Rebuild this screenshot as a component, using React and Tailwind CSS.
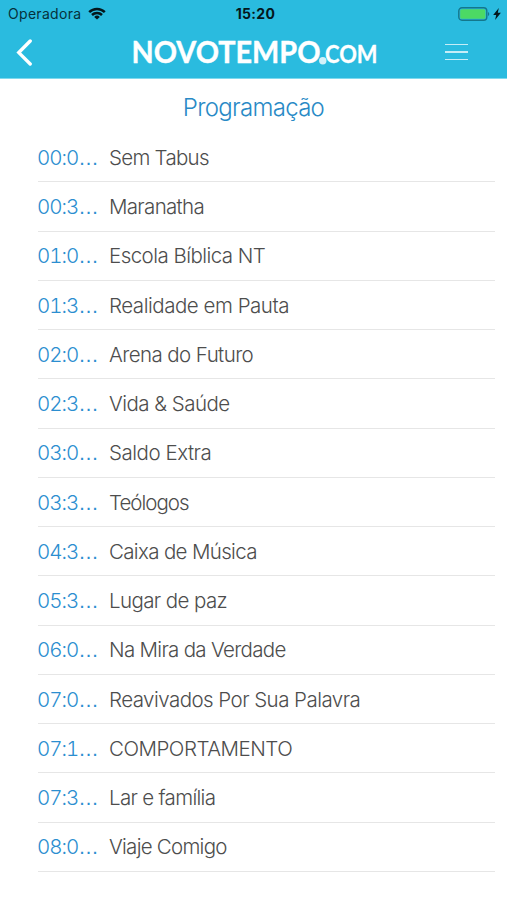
import React from 'react';

const programs = [
    { time: '00:00', name: 'Sem Tabus', tracking: 'tracking-[-0.72px]' },
    { time: '00:30', name: 'Maranatha', tracking: 'tracking-[-0.68px]' },
    { time: '01:00', name: 'Escola Bíblica NT', tracking: 'tracking-[-0.54px]' },
    { time: '01:30', name: 'Realidade em Pauta', tracking: 'tracking-[-0.47px]' },
    { time: '02:00', name: 'Arena do Futuro', tracking: 'tracking-[-0.58px]' },
    { time: '02:30', name: 'Vida & Saúde', tracking: 'tracking-[-0.53px]' },
    { time: '03:00', name: 'Saldo Extra', tracking: 'tracking-[-0.47px]' },
    { time: '03:30', name: 'Teólogos', tracking: 'tracking-[-0.98px]' },
    { time: '04:30', name: 'Caixa de Música', tracking: 'tracking-[-0.66px]' },
    { time: '05:30', name: 'Lugar de paz', tracking: 'tracking-[-0.6px]' },
    { time: '06:00', name: 'Na Mira da Verdade', tracking: 'tracking-[-0.69px]' },
    { time: '07:00', name: 'Reavivados Por Sua Palavra', tracking: 'tracking-[-0.54px]' },
    { time: '07:15', name: 'COMPORTAMENTO', tracking: 'tracking-[-0.49px]' },
    { time: '07:30', name: 'Lar e família', tracking: 'tracking-[-0.68px]' },
    { time: '08:00', name: 'Viaje Comigo', tracking: 'tracking-[-0.74px]' },
];

const StatusBar = () => (
    <div className="grid h-[27px] grid-cols-3 items-center pl-[8px] pr-[6px] leading-none text-[#06313b]">
        <div className="flex items-center gap-[7px]">
            <span className="pt-[1px] text-[14px] tracking-[0.3px]">Operadora</span>
            <svg className="h-[13px] w-[18px]" viewBox="0 0 18 13" fill="none" stroke="#04171c" strokeWidth="2.5">
                <path d="M1.2 5.2a11 11 0 0 1 15.6 0" />
                <path d="M4 8a7.1 7.1 0 0 1 10 0" />
                <path d="M9 12.6 6.2 9.9a4 4 0 0 1 5.6 0z" fill="#04171c" stroke="none" />
            </svg>
        </div>
        <span className="pl-[2px] text-center text-[14px] font-bold tracking-[0.3px] text-[#04171c]">15:20</span>
        <div className="flex items-center justify-end gap-[3px]">
            <svg className="h-[14px] w-[32px]" viewBox="0 0 32 14">
                <rect x="0.8" y="0.8" width="28" height="12.4" rx="3.2" fill="none" stroke="#14778c" strokeWidth="1.4" />
                <rect x="2.2" y="2.2" width="25.2" height="9.6" rx="1.6" fill="#4cd964" />
                <path d="M30 5v4a2.2 2.2 0 0 0 0-4z" fill="#14778c" />
            </svg>
            <svg className="h-[12px] w-[8px]" viewBox="0 0 8 12" fill="#04171c">
                <path d="M5.8 0 0.2 6.9h3L2.1 12 7.9 4.8H4.8z" />
            </svg>
        </div>
    </div>
);

const Logo = () => (
    <svg className="h-[44px] w-[256px]" viewBox="130 30 256 44" fill="#fff" role="img">
        <text x="131.5" y="62.5" fontFamily="Lato" fontWeight="700" fontSize="30" textLength="189" lengthAdjust="spacingAndGlyphs" stroke="#fff" strokeWidth="0.4">NOVOTEMPO</text>
        <circle cx="322.8" cy="60.8" r="3.7" fill="#d2f2fa" />
        <text x="325" y="62.5" fontFamily="Lato" fontWeight="700" fontSize="24.5" textLength="52.5" lengthAdjust="spacingAndGlyphs" stroke="#fff" strokeWidth="0.3">COM</text>
    </svg>
);

const App = () => {
    return (
        <div className="h-[900px] w-[507px] overflow-hidden bg-white font-['Inter','Liberation_Sans',sans-serif]">
            {/* Header */}
            <header className="h-[79px] border-b border-[#7ed9ee] bg-[#2abbdf]">
                <StatusBar />
                <div className="flex h-[50px] items-center pl-[16px] pr-[39px]">
                    <svg className="h-[28px] w-[17px]" viewBox="0 0 17 28" fill="none" stroke="#fff" strokeWidth="3.4" strokeLinecap="round">
                        <path d="M14.2 3 2.8 14.6 14.2 26" />
                    </svg>
                    <div className="ml-[97px]">
                        <Logo />
                    </div>
                    <div className="ml-auto flex w-[23px] flex-col gap-[6px]">
                        <span className="h-[1.5px] bg-[#c5edf7]" />
                        <span className="h-[1.5px] bg-[#c5edf7]" />
                        <span className="h-[1.5px] bg-[#c5edf7]" />
                    </div>
                </div>
            </header>

            <h1 className="flex h-[54px] items-center justify-center pt-[3px] text-[24px] font-light tracking-[-0.7px] text-[#298ac6]">
                Programação
            </h1>

            {/* Schedule */}
            <ul className="pl-[38px] pr-[12px] text-[20.5px] font-light">
                {programs.map((program) => (
                    <li key={program.time} className="flex h-[49.27px] items-center border-b border-[#e6e6e6] pt-[2px]">
                        <span className="-ml-[1px] flex w-[72px] shrink-0 text-[#2b8ed0]">
                            <span className="w-[41.3px] tracking-[-1px] tabular-nums">{program.time.slice(0, 4)}</span>
                            <span className="font-['Liberation_Sans']">…</span>
                        </span>
                        <span className={`whitespace-nowrap text-[#4d4d4d] ${program.tracking}`}>{program.name}</span>
                    </li>
                ))}
            </ul>
        </div>
    );
};

export default App;
